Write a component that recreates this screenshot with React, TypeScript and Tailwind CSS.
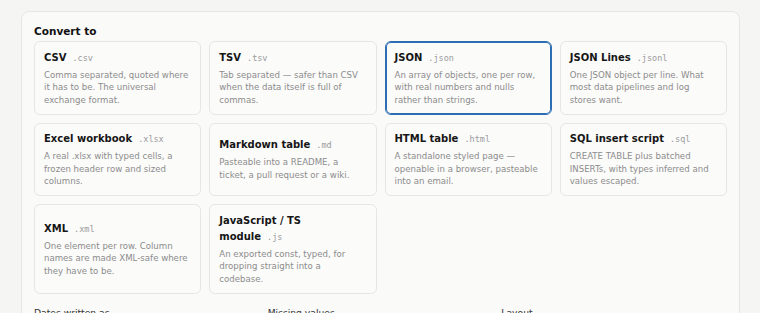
import React from "react";

type Fmt = { name: string; ext: string; desc: string; selected?: boolean };

const formats: Fmt[] = [
  { name: "CSV", ext: ".csv", desc: "Comma separated, quoted where it has to be. The universal exchange format." },
  { name: "TSV", ext: ".tsv", desc: "Tab separated \u2014 safer than CSV when the data itself is full of commas." },
  { name: "JSON", ext: ".json", desc: "An array of objects, one per row, with real numbers and nulls rather than strings.", selected: true },
  { name: "JSON Lines", ext: ".jsonl", desc: "One JSON object per line. What most data pipelines and log stores want." },
  { name: "Excel workbook", ext: ".xlsx", desc: "A real .xlsx with typed cells, a frozen header row and sized columns." },
  { name: "Markdown table", ext: ".md", desc: "Pasteable into a README, a ticket, a pull request or a wiki." },
  { name: "HTML table", ext: ".html", desc: "A standalone styled page \u2014 openable in a browser, pasteable into an email." },
  { name: "SQL insert script", ext: ".sql", desc: "CREATE TABLE plus batched INSERTs, with types inferred and values escaped." },
  { name: "XML", ext: ".xml", desc: "One element per row. Column names are made XML-safe where they have to be." },
  { name: "JavaScript / TS module", ext: ".js", desc: "An exported const, typed, for dropping straight into a codebase." },
];

function Card({ f }: { f: Fmt }) {
  return (
    <div
      className={
        "flex flex-col justify-center rounded-[6px] border bg-[#fbfbfa] px-[9px] pt-[7.5px] pb-[7.5px] " +
        (f.selected
          ? "border-[#2d6db3] shadow-[inset_0_0_0_1px_#2d6db3]"
          : "border-[#e6e6e3]")
      }
    >
      <div className="text-[10px] leading-[16px] font-bold text-[#161616]">
        <span>{f.name}</span>
        <code className="ml-[6px] font-['DejaVu_Sans_Mono',monospace] text-[8.5px] font-normal text-[#9a9a9a]">{f.ext}</code>
      </div>
      <div className="mt-[3px] text-[8.6px] leading-[12.5px] text-[#8c8c8c]">{f.desc}</div>
    </div>
  );
}

function Field({ label, value }: { label: string; value: string }) {
  return (
    <div className="flex flex-col gap-[4px]">
      <div className="text-[9.2px] leading-[13px] text-[#333333]">{label}</div>
      <div className="h-[26px] rounded-[5px] border border-[#e0e0dd] bg-white px-[8px] text-[9px] leading-[24px] text-[#222]">{value}</div>
    </div>
  );
}

export default function App() {
  return (
    <div className="min-h-[313px] bg-[#f5f5f3] pl-[21px] pt-[11px] font-['DejaVu_Sans',sans-serif]">
      <div className="w-[719px] rounded-[8px] border border-[#e6e6e3] bg-[#fafaf9] p-[12px]">
        <div className="mb-[3px] text-[10.5px] leading-[14px] font-bold text-[#111]">Convert to</div>
        <div className="grid grid-cols-4 gap-[8px]">
          {formats.map((f) => (
            <Card key={f.name} f={f} />
          ))}
        </div>
        <div className="mt-[12px] grid grid-cols-3 gap-[8px]">
          <Field label="Dates written as" value="ISO 8601" />
          <Field label="Missing values" value="null" />
          <Field label="Layout" value="Pretty printed" />
        </div>
      </div>
    </div>
  );
}
